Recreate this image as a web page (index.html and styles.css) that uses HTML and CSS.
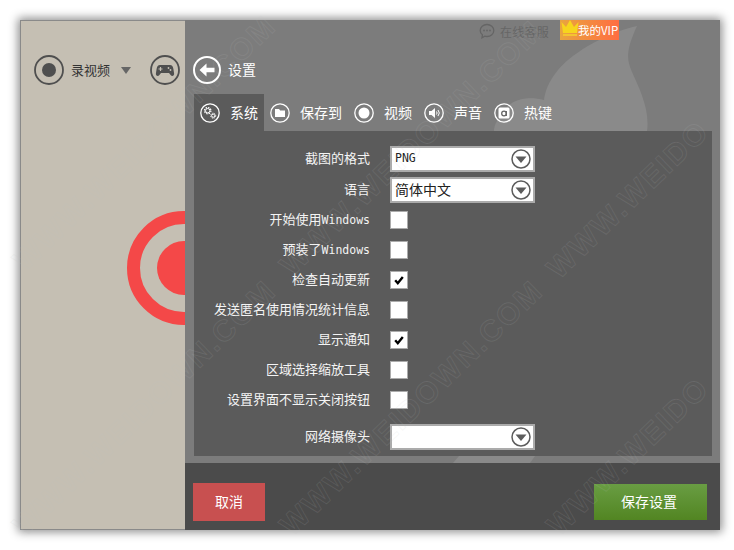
FILE: index.html
```html
<!DOCTYPE html>
<html lang="zh-CN">
<head>
<meta charset="utf-8">
<title>设置</title>
<link rel="stylesheet" href="styles.css">
</head>
<body>
<div class="window">
  <aside class="side">
    <svg class="ring-icon" width="30" height="30" viewBox="0 0 30 30"><circle cx="15" cy="15" r="14" fill="none" stroke="#4f4f4f" stroke-width="1.800"/><circle cx="15" cy="15" r="7" fill="#4f4f4f"/></svg>
    <span class="rec-label">录视频</span>
    <span class="caret"></span>
    <svg class="pad-icon" width="30" height="30" viewBox="0 0 30 30"><circle cx="15" cy="15" r="14" fill="none" stroke="#4f4f4f" stroke-width="1.800"/><path d="M10 10h10c2 0 3 1.500 3.400 4l.7 4.500c.3 2.500-2.200 3.300-3.500 1.500L19 18h-8l-1.600 2c-1.300 1.800-3.800 1-3.500-1.500l.7-4.500C7 11.500 8 10 10 10z" fill="#4f4f4f"/><path d="M8.500 14h4M10.500 12v4" stroke="#c5bfb3" stroke-width="1.200"/><circle cx="18.500" cy="13" r=".9" fill="#c5bfb3"/><circle cx="20.500" cy="15" r=".9" fill="#c5bfb3"/></svg>
    <svg class="target" width="114" height="114" viewBox="0 0 114 114"><circle cx="57" cy="57" r="50.500" fill="none" stroke="#f44848" stroke-width="13"/><circle cx="57" cy="57" r="27" fill="#f44848"/></svg>
  </aside>
  <main class="main">
    <svg class="flame" width="535" height="510" viewBox="185 20 535 510"><path d="M637 26C610 32 575 50 558 70C548 82 545 92 544 100C530 96 512 98 505 110C498 118 494 125 494 131L647 131C650 110 640 90 632 72C627 60 625 52 637 26Z" fill="#8a8a8a"/><path d="M453 463L459 456H535L530 463Z" fill="#8a8a8a"/></svg>
    <div class="topbar">
      <svg class="chat" width="16" height="16" viewBox="0 0 16 16"><path d="M8 1.500c3.800 0 6.800 2.700 6.800 6s-3 6-6.800 6c-.8 0-1.500-.1-2.200-.3L3 14.800l.4-3C2 10.700 1.200 9.200 1.200 7.500c0-3.300 3-6 6.800-6z" fill="none" stroke="#656565" stroke-width="1.300"/><circle cx="5" cy="7.500" r=".9" fill="#656565"/><circle cx="8" cy="7.500" r=".9" fill="#656565"/><circle cx="11" cy="7.500" r=".9" fill="#656565"/></svg>
      <span class="service">在线客服</span>
      <div class="vip">
        <svg class="crown" width="20" height="19" viewBox="0 0 20 19"><path d="M1.500 3l4.500 5 4-7 4 7 4.500-5-1.500 11H3z" fill="#f7d51d"/><rect x="3" y="15" width="14" height="2" fill="#f4c431"/></svg>
        <span>我的VIP</span>
      </div>
    </div>
    <div class="titlebar">
      <svg width="28" height="28" viewBox="0 0 28 28"><circle cx="14" cy="14" r="13" fill="none" stroke="#fff" stroke-width="2"/><path d="M6.500 14l7-6.500v4.300h8v4.400h-8v4.300z" fill="#fff"/></svg>
      <span class="title">设置</span>
    </div>
    <nav class="tabs">
      <div class="tab active">
        <svg width="20" height="20" viewBox="0 0 20 20"><circle cx="10" cy="10" r="9.200" fill="none" stroke="#fff" stroke-width="1.300"/><circle cx="7.700" cy="7.700" r="2.200" fill="none" stroke="#fff" stroke-width="1"/><circle cx="7.700" cy="7.700" r="3.200" fill="none" stroke="#fff" stroke-width="1.200" stroke-dasharray="1.500 1"/><circle cx="13.200" cy="12.700" r="1.600" fill="none" stroke="#fff" stroke-width="1"/><circle cx="13.200" cy="12.700" r="2.500" fill="none" stroke="#fff" stroke-width="1" stroke-dasharray="1.200 .9"/></svg>
        <span>系统</span>
      </div>
      <div class="tab">
        <svg width="20" height="20" viewBox="0 0 20 20"><circle cx="10" cy="10" r="9.200" fill="none" stroke="#fff" stroke-width="1.300"/><path d="M5 6h4l1.200 1.500H15V14H5z" fill="#fff"/></svg>
        <span>保存到</span>
      </div>
      <div class="tab">
        <svg width="20" height="20" viewBox="0 0 20 20"><circle cx="10" cy="10" r="9.200" fill="none" stroke="#fff" stroke-width="1.300"/><circle cx="10" cy="10" r="5.500" fill="#fff"/></svg>
        <span>视频</span>
      </div>
      <div class="tab">
        <svg width="20" height="20" viewBox="0 0 20 20"><circle cx="10" cy="10" r="9.200" fill="none" stroke="#fff" stroke-width="1.300"/><path d="M5 8h2.500L11 5v10l-3.500-3H5z" fill="#fff"/><path d="M12.500 8.500a2.500 2.500 0 0 1 0 3M14 7a4.500 4.500 0 0 1 0 6" fill="none" stroke="#fff"/></svg>
        <span>声音</span>
      </div>
      <div class="tab">
        <svg width="20" height="20" viewBox="0 0 20 20"><circle cx="10" cy="10" r="9.200" fill="none" stroke="#fff" stroke-width="1.300"/><rect x="4.500" y="4.500" width="11" height="11" rx="1.500" fill="#fff"/><circle cx="10" cy="10.500" r="2.300" fill="none" stroke="#666" stroke-width="1.300"/><path d="M12.300 8v5" stroke="#666" stroke-width="1.300"/></svg>
        <span>热键</span>
      </div>
    </nav>
    <section class="panel">
      <div class="row row-select">
        <label class="label">截图的格式</label>
        <div class="select"><span class="mono value">PNG</span>
          <svg width="20" height="20" viewBox="0 0 20 20"><circle cx="10" cy="10" r="9" fill="none" stroke="#5c5c5c" stroke-width="1.500"/><path d="M4.500 7.500h11L10 14z" fill="#5c5c5c"/></svg>
        </div>
      </div>
      <div class="row row-select row-gap">
        <label class="label">语言</label>
        <div class="select"><span class="value">简体中文</span>
          <svg width="20" height="20" viewBox="0 0 20 20"><circle cx="10" cy="10" r="9" fill="none" stroke="#5c5c5c" stroke-width="1.500"/><path d="M4.500 7.500h11L10 14z" fill="#5c5c5c"/></svg>
        </div>
      </div>
      <div class="row row-check"><label class="label">开始使用<span class="mono">Windows</span></label><span class="check"></span></div>
      <div class="row row-check"><label class="label">预装了<span class="mono">Windows</span></label><span class="check"></span></div>
      <div class="row row-check"><label class="label">检查自动更新</label><span class="check"><svg width="14" height="14" viewBox="0 0 14 14"><path d="M3.200 7.300L5.800 10.200 10.800 4" fill="none" stroke="#000" stroke-width="2.400"/></svg></span></div>
      <div class="row row-check"><label class="label">发送匿名使用情况统计信息</label><span class="check"></span></div>
      <div class="row row-check"><label class="label">显示通知</label><span class="check"><svg width="14" height="14" viewBox="0 0 14 14"><path d="M3.200 7.300L5.800 10.200 10.800 4" fill="none" stroke="#000" stroke-width="2.400"/></svg></span></div>
      <div class="row row-check"><label class="label">区域选择缩放工具</label><span class="check"></span></div>
      <div class="row row-check"><label class="label">设置界面不显示关闭按钮</label><span class="check"></span></div>
      <div class="row row-select row-last">
        <label class="label">网络摄像头</label>
        <div class="select"><span class="value"></span>
          <svg width="20" height="20" viewBox="0 0 20 20"><circle cx="10" cy="10" r="9" fill="none" stroke="#5c5c5c" stroke-width="1.500"/><path d="M4.500 7.500h11L10 14z" fill="#5c5c5c"/></svg>
        </div>
      </div>
    </section>
    <footer class="footer">
      <button class="btn btn-cancel">取消</button>
      <button class="btn btn-save">保存设置</button>
    </footer>
  </main>
</div>
<div class="watermarks" aria-hidden="true">
  <span class="wm wm1">WWW.WEIDOWN.COM</span>
  <span class="wm wm2">WWW.WEIDOWN.COM</span>
  <span class="wm wm3">WWW.WEIDOWN.COM</span>
  <span class="wm wm4">WWW.WEIDOWN.COM</span>
  <span class="wm wm5">WWW.WEIDO</span>
  <span class="wm wm6">WWW.WEIDO</span>
</div>
</body>
</html>
```

FILE: styles.css
```css
* { box-sizing: border-box; }
html, body { margin: 0; height: 550px; overflow: hidden; background: #fff; }
body {
  position: relative;
  padding: 20px 14px 20px 20px;
  font-family: "Noto Sans CJK SC", "Liberation Sans", sans-serif;
  font-size: 14px;
  color: #fff;
}
.window {
  display: grid;
  grid-template-columns: 165px 535px;
  width: 700px;
  height: 510px;
  box-shadow: 0 0 9px 2px rgba(0, 0, 0, .45);
}
.side {
  position: relative;
  display: flex;
  align-items: flex-start;
  height: 510px;
  padding: 34px 0 0 13px;
  overflow: hidden;
  background: #c5bfb3;
  border: 1px solid #8a8a8a;
  border-right: 0;
  color: #333;
}
.rec-label { margin-left: 7px; width: 42px; margin-top: 5px; font-size: 13px; line-height: 19px; white-space: nowrap; }
.caret {
  margin: 12px 0 0 8px;
  border-style: solid;
  border-width: 7px 5.500px 0;
  border-color: #666 transparent transparent;
}
.pad-icon { margin-left: 19px; flex: none; }
.ring-icon { flex: none; }
.target { position: absolute; left: 106px; top: 190px; }
.main { position: relative; display: flex; flex-direction: column; height: 510px; background: #7c7c7c; overflow: hidden; }
.flame { position: absolute; left: 0; top: 0; }
.topbar, .titlebar, .tabs, .panel, .footer { position: relative; }
.topbar { display: flex; align-items: center; justify-content: flex-end; height: 20px; padding-right: 101px; }
.chat { margin-right: 5px; margin-top: 2px; }
.service { width: 49px; margin-top: 2px; color: #666; font-size: 12px; white-space: nowrap; letter-spacing: .25px; }
.vip {
  display: flex;
  align-items: center;
  width: 59px;
  height: 20px;
  margin-left: 11px;
  background: linear-gradient(90deg, #e9a53e, #ff6d42);
  font-size: 12px;
}
.crown { flex: none; margin-right: -2px; margin-top: -3px; }
.vip span { white-space: nowrap; font-size: 11.500px; }
.titlebar { display: flex; align-items: center; gap: 7px; height: 54px; padding: 6px 0 0 8px; }
.title { font-size: 14px; padding-bottom: 2px; }
.tabs { display: flex; height: 37px; margin-left: 9px; }
.tab { display: flex; align-items: center; gap: 10px; padding: 0 6px; }
.tab span { white-space: nowrap; padding-bottom: 2px; }
.tab.active { background: #5b5b5b; }
.panel { width: 518px; height: 325px; margin-left: 9px; padding-top: 15px; background: #5b5b5b; }
.row { display: flex; align-items: center; gap: 20px; }
.label { width: 176px; padding-bottom: 3px; text-align: right; font-size: 13px; color: #f4f4f4; white-space: nowrap; }
.mono { font-family: "DejaVu Sans Mono", monospace; font-size: 11.500px; }
.row-select { height: 26px; }
.row-gap { margin-top: 5px; margin-bottom: 2px; }
.row-check { height: 30px; }
.row-last { margin-top: 9px; }
.select {
  display: flex;
  align-items: center;
  justify-content: space-between;
  width: 145px;
  height: 26px;
  padding: 0 2px 0 3px;
  background: #fff;
  border: 2px solid #ababab;
  color: #222;
}
.value { font-size: 14px; padding-bottom: 2px; }
.mono.value { font-size: 11.500px; }
.check {
  display: flex;
  align-items: center;
  justify-content: center;
  width: 18px;
  height: 18px;
  background: #fff;
  border: 1px solid #ababab;
}
.footer {
  display: flex;
  align-items: center;
  justify-content: space-between;
  height: 67px;
  margin-top: 7px;
  padding: 20px 13px 9px 8px;
  background: #4b4b4b;
}
.btn { border: 0; color: #fff; font: inherit; padding: 0 0 3px; }
.btn-cancel { width: 72px; height: 38px; background: #c85050; }
.btn-save { width: 113px; height: 36px; padding-right: 3px; background: linear-gradient(#699d43, #528522); }
.watermarks { position: absolute; inset: 0; overflow: hidden; pointer-events: none; }
.wm {
  position: absolute;
  font-family: "Liberation Sans", sans-serif;
  font-weight: 700;
  font-size: 30px;
  line-height: 30px;
  letter-spacing: 2px;
  white-space: nowrap;
  color: transparent;
  -webkit-text-stroke: 1px rgba(195, 195, 195, .13);
  transform: rotate(-44deg);
  transform-origin: left center;
}
.wm1 { left: 18px; top: 250px; }
.wm2 { left: 18px; top: 515px; }
.wm3 { left: 285px; top: 255px; }
.wm4 { left: 285px; top: 515px; }
.wm5 { left: 552px; top: 258px; }
.wm6 { left: 552px; top: 515px; }
```
